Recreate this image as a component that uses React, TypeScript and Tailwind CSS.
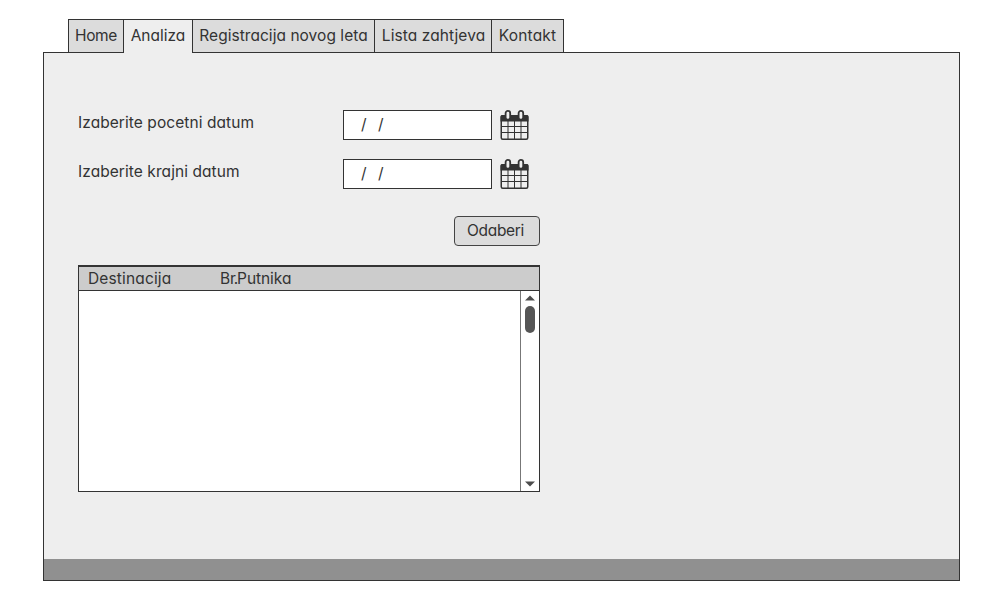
function CalendarIcon() {
  return (
    <svg width="29" height="31" viewBox="0 0 29 31" className="shrink-0" aria-hidden="true">
      <rect x="1.25" y="5.75" width="26.5" height="23.5" rx="1.5" fill="#efefef" stroke="#333" strokeWidth="1.5" />
      <path d="M0.5 6.5Q0.5 5 2 5h25Q28.5 5 28.5 6.5V11.4H0.5z" fill="#333" />
      <path d="M8 11v18M14.5 11v18M21 11v18M1 16.5h27M1 22.5h27" stroke="#333" strokeWidth="1" />
      <rect x="5.6" y="0.9" width="4.6" height="8.8" rx="2.3" fill="#eee" stroke="#333" strokeWidth="1.8" />
      <rect x="18.6" y="0.9" width="4.6" height="8.8" rx="2.3" fill="#eee" stroke="#333" strokeWidth="1.8" />
    </svg>
  );
}

const tabs = [
  { label: "Home", style: "w-[56px] border-b bg-[#dcdcdc]", text: "tracking-[-0.4px]" },
  { label: "Analiza", style: "w-[70px] bg-[#eeeeee]", text: "tracking-[0px]" },
  { label: "Registracija novog leta", style: "w-[183px] border-b bg-[#dcdcdc]", text: "tracking-[0.04px]" },
  { label: "Lista zahtjeva", style: "w-[118px] border-b bg-[#dcdcdc] pl-px", text: "tracking-[0.1px]" },
  { label: "Kontakt", style: "w-[73px] border-b bg-[#dcdcdc]", text: "tracking-[0.2px]" },
];

function DateRow({ label }: { label: string }) {
  return (
    <div className="flex h-[30px]">
      <label className="w-[265px] pt-[2px] leading-[22px] tracking-[0.07px]">{label}</label>
      <div className="flex w-[149px] border border-[#333] bg-white pl-[17px] leading-[27px]">
        <span className="w-[17px]">/</span>
        <span>/</span>
      </div>
      <div className="ml-[8px]">
        <CalendarIcon />
      </div>
    </div>
  );
}

export default function App() {
  return (
    <div className="h-[608px] w-[990px] bg-white pl-[43px] pt-[19px] font-['Inter',sans-serif] text-[15.5px] text-[#333] [font-feature-settings:'cv11']">
      <nav className="relative z-10 ml-[25px] flex h-[34px]">
        {tabs.map((tab) => (
          <div
            key={tab.label}
            className={`-mr-px flex h-[34px] justify-center whitespace-nowrap border-x border-t border-[#333] leading-[32px] ${tab.style}`}
          >
            <span className={tab.text}>{tab.label}</span>
          </div>
        ))}
      </nav>
      <main className="-mt-px flex h-[529px] w-[917px] flex-col border border-[#333] bg-[#eeeeee]">
        <section className="w-[496px] flex-1 pl-[34px] pt-[57px]">
          <DateRow label="Izaberite pocetni datum" />
          <div className="h-[19px]" />
          <DateRow label="Izaberite krajni datum" />
          <div className="mt-[27px] flex justify-end">
            <button className="flex h-[30px] w-[86px] justify-center rounded-[4px] border border-[#444] bg-[#dcdcdc] pr-[3px] leading-[28px]">
              <span className="tracking-[-0.3px]">Odaberi</span>
            </button>
          </div>
          <div className="mt-[19px] flex h-[227px] w-[462px] flex-col border border-[#333] bg-white">
            <div className="flex h-[25px] border-b border-t border-[#333] bg-[#cccccc] pl-[9px] leading-[24px]">
              <span className="w-[132px] tracking-[0.15px]">Destinacija</span>
              <span className="tracking-[-0.05px]">
                B<span className="tracking-[-1.2px]">r.</span>Putnika
              </span>
            </div>
            <div className="flex flex-1">
              <div className="w-[441px] bg-white" />
              <div className="flex w-[19px] flex-col items-center border-l border-[#777] pb-[4px] pt-[4px]">
                <svg width="10" height="6" viewBox="0 0 10 6" aria-hidden="true">
                  <path d="M0 5.5L5 0.5l5 5z" fill="#4d4d4d" />
                </svg>
                <div className="mt-[5px] h-[27px] w-[10px] rounded-full bg-[#555]" />
                <svg className="mt-auto" width="10" height="6" viewBox="0 0 10 6" aria-hidden="true">
                  <path d="M0 0.5L5 5.5l5-5z" fill="#4d4d4d" />
                </svg>
              </div>
            </div>
          </div>
        </section>
        <footer className="h-[21px] bg-[#909090]" />
      </main>
    </div>
  );
}
